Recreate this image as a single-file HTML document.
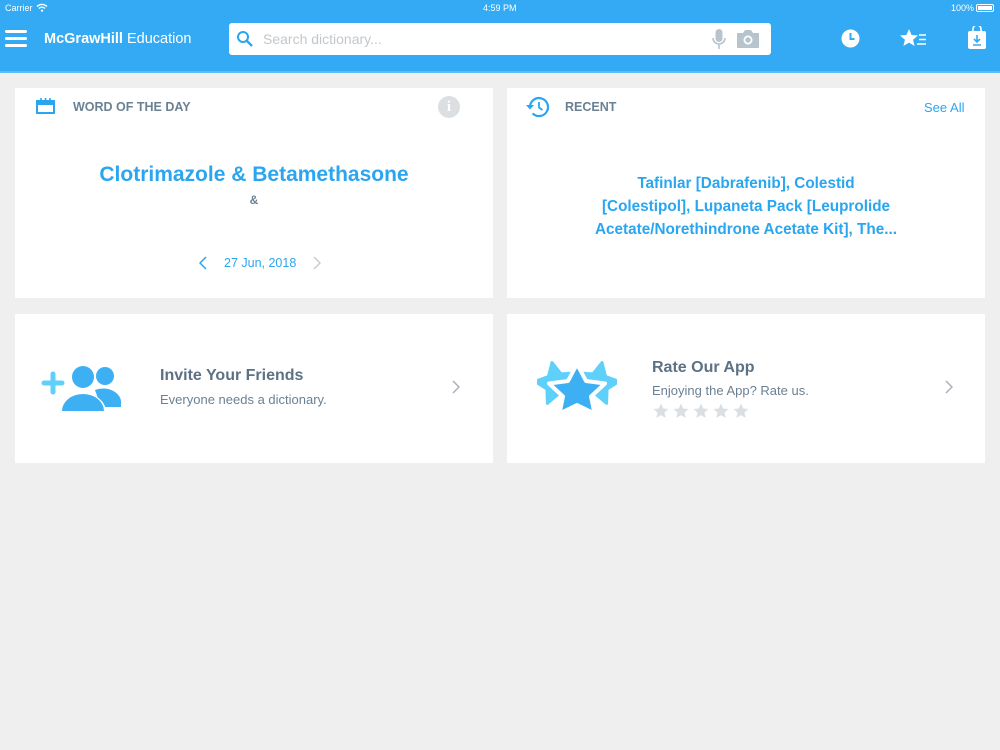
<!DOCTYPE html>
<html><head><meta charset="utf-8"><style>
*{margin:0;padding:0;box-sizing:border-box}
body{width:1000px;height:750px;background:#efeff0;font-family:"Liberation Sans",sans-serif;position:relative;overflow:hidden}
.hdr{position:absolute;left:0;top:0;width:1000px;height:73px;background:#33aaf3;border-bottom:2px solid #5cbcf5}
.st{position:absolute;top:3px;font-size:9px;color:#fff}
.card{position:absolute;background:#fff}
.ttl{position:absolute;font-size:12.5px;font-weight:bold;color:#6b8193}
.blue{color:#2aa6f0}
</style></head><body>
<div class="hdr">
<div class="st" style="left:5px">Carrier</div>
<svg style="position:absolute;left:36px;top:3px" width="12" height="9" viewBox="0 0 12 9"><path d="M1 3.5a7 7 0 0 1 10 0M3 5.5a4 4 0 0 1 6 0" stroke="#fff" stroke-width="1.4" fill="none"/><circle cx="6" cy="7.6" r="1.1" fill="#fff"/></svg>
<div class="st" style="left:483px">4:59 PM</div>
<div class="st" style="left:951px">100%</div>
<div style="position:absolute;left:976px;top:4px;width:18px;height:8px;border:1px solid #fff;border-radius:2px;padding:1px"><div style="background:#fff;width:100%;height:100%"></div></div>
<div style="position:absolute;left:5px;top:30px;width:22px;height:3px;background:#fff;border-radius:2px"></div>
<div style="position:absolute;left:5px;top:37px;width:22px;height:3px;background:#fff;border-radius:2px"></div>
<div style="position:absolute;left:5px;top:44px;width:22px;height:3px;background:#fff;border-radius:2px"></div>
<div style="position:absolute;left:44px;top:31px;font-size:14.5px;color:#fff"><b>McGrawHill</b> Education</div>
<div style="position:absolute;left:229px;top:23px;width:542px;height:32px;background:#fff;border-radius:3px">
<svg style="position:absolute;left:7px;top:7px" width="18" height="18" viewBox="0 0 18 18"><circle cx="7" cy="7" r="5" stroke="#2aa6f0" stroke-width="2" fill="none"/><path d="M11 11l5 5" stroke="#2aa6f0" stroke-width="2.4"/></svg>
<div style="position:absolute;left:34px;top:8px;font-size:14px;color:#c2c7cc">Search dictionary...</div>
<svg style="position:absolute;left:483px;top:6px" width="14" height="22" viewBox="0 0 14 22"><rect x="3.5" y="0" width="7" height="13" rx="3.5" fill="#b7c4cd"/><path d="M1 9a6 6 0 0 0 12 0M7 15v5" stroke="#b7c4cd" stroke-width="1.6" fill="none"/></svg>
<svg style="position:absolute;left:508px;top:6px" width="22" height="19" viewBox="0 0 22 19"><path d="M0 4h6l2-3h6l2 3h6v15H0z" fill="#b7c4cd"/><circle cx="11" cy="11" r="4.5" fill="#fff"/><circle cx="11" cy="11" r="2.7" fill="#b7c4cd"/></svg>
</div>
<svg style="position:absolute;left:841px;top:29px" width="19" height="19" viewBox="0 0 19 19"><circle cx="9.5" cy="9.5" r="9" fill="#fff"/><path d="M9.5 4v6h4" stroke="#33aaf3" stroke-width="2" fill="none"/></svg>
<svg style="position:absolute;left:900px;top:29px" width="28" height="19" viewBox="0 0 28 19"><path d="M9 0l2.6 6 6.4.5-4.9 4.2 1.5 6.3L9 13.6 3.4 17l1.5-6.3L0 6.5 6.4 6z" fill="#fff"/><path d="M19 6h7M19 10.5h7M17 15h9" stroke="#fff" stroke-width="1.6"/></svg>
<svg style="position:absolute;left:968px;top:26px" width="18" height="23" viewBox="0 0 18 23"><path d="M5 6V3a4 4 0 0 1 8 0v3" stroke="#fff" stroke-width="1.6" fill="none"/><rect x="0" y="5" width="18" height="18" rx="2" fill="#fff"/><path d="M9 9v7M6 13l3 3 3-3M5 19h8" stroke="#33aaf3" stroke-width="1.6" fill="none"/></svg>
</div>

<div class="card" style="left:15px;top:88px;width:478px;height:210px">
<svg style="position:absolute;left:21px;top:10px" width="19" height="16" viewBox="0 0 19 16"><rect x="1" y="3" width="17" height="12" stroke="#2aa6f0" stroke-width="2" fill="none"/><rect x="1" y="3" width="17" height="4" fill="#2aa6f0"/><path d="M5 0v4M9.5 0v4M14 0v4" stroke="#2aa6f0" stroke-width="1.6"/></svg>
<div class="ttl" style="left:58px;top:12px">WORD OF THE DAY</div>
<div style="position:absolute;left:423px;top:8px;width:22px;height:22px;border-radius:50%;background:#dcdfe2;color:#fff;font-weight:bold;font-size:15px;text-align:center;line-height:22px;font-family:'Liberation Serif',serif">i</div>
<div class="blue" style="position:absolute;left:0;width:478px;top:75px;text-align:center;font-size:21px;font-weight:bold">Clotrimazole &amp; Betamethasone</div>
<div style="position:absolute;left:0;width:478px;top:105px;text-align:center;font-size:12px;font-weight:bold;color:#6b8193">&amp;</div>
<svg style="position:absolute;left:184px;top:168px" width="8" height="14" viewBox="0 0 8 14"><path d="M7 1L1 7l6 6" stroke="#2aa6f0" stroke-width="1.5" fill="none"/></svg>
<div class="blue" style="position:absolute;left:209px;top:168px;font-size:12.5px">27 Jun, 2018</div>
<svg style="position:absolute;left:298px;top:168px" width="8" height="14" viewBox="0 0 8 14"><path d="M1 1l6 6-6 6" stroke="#c8ccd0" stroke-width="1.5" fill="none"/></svg>
</div>

<div class="card" style="left:507px;top:88px;width:478px;height:210px">
<svg style="position:absolute;left:18px;top:8px" width="24" height="22" viewBox="0 0 24 22"><path d="M5 11a9 9 0 1 1 2.6 6.4" stroke="#2aa6f0" stroke-width="2.2" fill="none"/><path d="M1 9l4 4.5L9 9z" fill="#2aa6f0"/><path d="M14 6v5.5l3.5 2.5" stroke="#2aa6f0" stroke-width="1.8" fill="none"/></svg>
<div class="ttl" style="left:58px;top:12px">RECENT</div>
<div class="blue" style="position:absolute;left:417px;top:12px;font-size:13px">See All</div>
<div class="blue" style="position:absolute;left:0;width:478px;top:84px;text-align:center;font-size:15.3px;font-weight:bold;line-height:23px">Tafinlar [Dabrafenib], Colestid<br>[Colestipol], Lupaneta Pack [Leuprolide<br>Acetate/Norethindrone Acetate Kit], The...</div>
</div>

<div class="card" style="left:15px;top:314px;width:478px;height:149px">
<svg style="position:absolute;left:26px;top:50px" width="82" height="48" viewBox="0 0 82 48"><path d="M3 19h18M12 10v18" stroke="#5fd0fa" stroke-width="5" stroke-linecap="round"/><circle cx="42" cy="13" r="11" fill="#3cb0f2"/><circle cx="64" cy="12" r="9" fill="#3cb0f2"/><path d="M54 26a18 14 0 0 1 26 14v3H60z" fill="#3cb0f2"/><path d="M19 48a23 19 0 0 1 46 0z" fill="#fff"/><path d="M21 47a21 17 0 0 1 42 0z" fill="#3cb0f2"/></svg>
<div style="position:absolute;left:145px;top:53px;font-size:16px;font-weight:bold;color:#5c7284">Invite Your Friends</div>
<div style="position:absolute;left:145px;top:78px;font-size:13px;color:#6b8193">Everyone needs a dictionary.</div>
<svg style="position:absolute;left:437px;top:66px" width="8" height="14" viewBox="0 0 8 14"><path d="M1 1l6 6-6 6" stroke="#a9b2ba" stroke-width="1.5" fill="none"/></svg>
</div>

<div class="card" style="left:507px;top:314px;width:478px;height:149px">
<svg style="position:absolute;left:30px;top:44px" width="80" height="56" viewBox="0 0 80 56"><g transform="rotate(-12 20 28)"><path d="M20 4l6.5 13 14 2-10 10 2.5 14-13-7-13 7 2.5-14-10-10 14-2z" fill="#5fd0fa" stroke="#5fd0fa" stroke-width="3" stroke-linejoin="round"/></g><g transform="rotate(12 60 28)"><path d="M60 4l6.5 13 14 2-10 10 2.5 14-13-7-13 7 2.5-14-10-10 14-2z" fill="#5fd0fa" stroke="#5fd0fa" stroke-width="3" stroke-linejoin="round"/></g><path d="M40 6l9 17 19 2.5-14 13 3.5 17L40 47l-17.5 8.5L26 38.5l-14-13L31 23z" fill="#3cb0f2" stroke="#fff" stroke-width="4" stroke-linejoin="round"/></svg>
<div style="position:absolute;left:145px;top:45px;font-size:16px;font-weight:bold;color:#5c7284">Rate Our App</div>
<div style="position:absolute;left:145px;top:69px;font-size:13px;color:#6b8193">Enjoying the App? Rate us.</div>
<svg style="position:absolute;left:146px;top:89px" width="100" height="16" viewBox="0 0 100 16"><g fill="#dcdfe2"><path id="s" d="M8 0.5l2.2 5 5.3.5-4 3.6 1.2 5.3L8 12.1 3.3 14.9l1.2-5.3-4-3.6 5.3-.5z"/><use href="#s" x="20"/><use href="#s" x="40"/><use href="#s" x="60"/><use href="#s" x="80"/></g></svg>
<svg style="position:absolute;left:438px;top:66px" width="8" height="14" viewBox="0 0 8 14"><path d="M1 1l6 6-6 6" stroke="#a9b2ba" stroke-width="1.5" fill="none"/></svg>
</div>
</body></html>
